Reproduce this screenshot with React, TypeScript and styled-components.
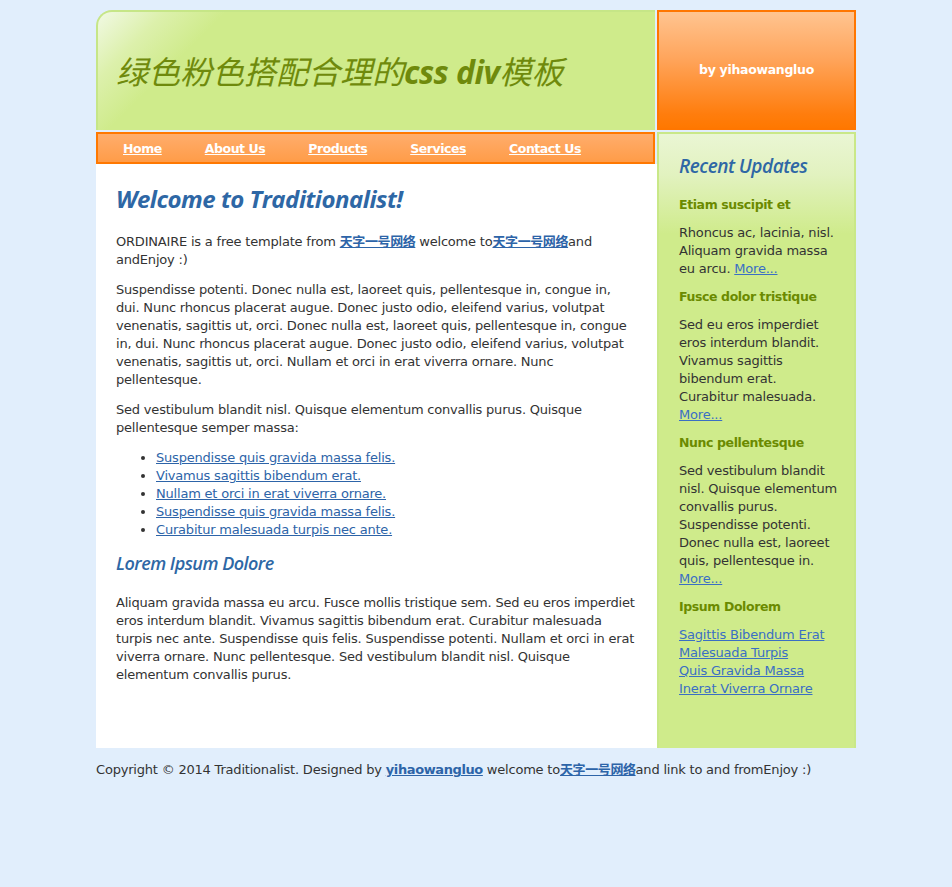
import React from "react";
import styled, { createGlobalStyle } from "styled-components";

const Global = createGlobalStyle`
  html, body { margin: 0; padding: 0; }
  body {
    background: #e1eefc;
    font-family: "DejaVu Sans", Verdana, "Noto Sans CJK SC", sans-serif;
    font-size: 13px;
    letter-spacing: -0.2px;
    line-height: 18px;
    color: #333333;
  }
`;

const Page = styled.div`
  width: 760px;
  margin: 10px auto 0;
`;

const Wrapper = styled.div`
  display: flex;
  align-items: stretch;
`;

const LeftCol = styled.div`
  width: 561px;
  display: flex;
  flex-direction: column;
`;

const RightCol = styled.div`
  width: 199px;
  display: flex;
  flex-direction: column;
`;

const Header = styled.div`
  width: 559px;
  height: 120px;
  box-sizing: border-box;
  margin-bottom: 2px;
  border-top: 2px solid #c6e687;
  border-left: 2px solid #c6e687;
  border-top-left-radius: 16px;
  background: linear-gradient(135deg, #f1f9e4 0%, #dcf0ab 10%, #cfeb8b 19%, #cfeb8b 100%);
  display: flex;
  align-items: center;
  padding-left: 18px;
`;

const Title = styled.h1`
  margin: 0;
  font-family: "Noto Sans CJK SC", "DejaVu Sans", sans-serif;
  font-weight: 400;
  font-style: italic;
  font-size: 32px;
  letter-spacing: 0;
  color: #6f8a0c;
  b {
    font-family: "Open Sans", "DejaVu Sans", sans-serif;
    font-weight: 700;
    letter-spacing: -0.5px;
  }
`;

const Brand = styled.div`
  height: 120px;
  box-sizing: border-box;
  margin-bottom: 2px;
  border: 2px solid #ff7600;
  background: linear-gradient(#ffc490 0%, #ffa55c 40%, #ff7d0d 88%, #ff7800 100%);
  display: flex;
  align-items: center;
  justify-content: center;
  color: #ffffff;
  font-weight: 700;
  font-size: 12.5px;
  letter-spacing: -0.3px;
`;

const Nav = styled.nav`
  width: 559px;
  height: 32px;
  box-sizing: border-box;
  border: 2px solid #ff7800;
  background: linear-gradient(#ffad6c, #ff9c48);
  display: flex;
  align-items: center;
  gap: 43px;
  padding: 2px 0 0 25px;
`;

const NavLink = styled.a`
  color: #ffffff;
  font-weight: 700;
  font-size: 12.5px;
  letter-spacing: -0.45px;
  text-decoration: underline;
  cursor: pointer;
`;

const Main = styled.main`
  flex: 1;
  background: #ffffff;
  padding: 20px 20px 52px 20px;
`;

const H1 = styled.h2`
  margin: 0 0 19px;
  font-family: "Open Sans", "DejaVu Sans", sans-serif;
  font-style: italic;
  font-weight: 700;
  font-size: 24px;
  line-height: 30px;
  letter-spacing: -0.5px;
  color: #2e67a5;
`;

const H2 = styled.h3`
  margin: 12px 0 19px;
  font-family: "Open Sans", "DejaVu Sans", sans-serif;
  font-style: italic;
  font-weight: 600;
  font-size: 18px;
  line-height: 24px;
  letter-spacing: -0.5px;
  color: #2e67a5;
`;

const P = styled.p`
  margin: 0 0 12px;
`;

const InlineLink = styled.a<{ $bold?: boolean }>`
  color: #2d64a8;
  text-decoration: underline;
  font-weight: ${(p) => (p.$bold ? 700 : 400)};
  letter-spacing: ${(p) => (p.$bold ? "-0.4px" : "inherit")};
  cursor: pointer;
`;

const List = styled.ul`
  margin: 0 0 12px;
  padding-left: 40px;
  li { margin: 0; }
`;

const Sidebar = styled.aside`
  flex: 1;
  box-sizing: border-box;
  border: 2px solid #c9e888;
  border-bottom: none;
  background: linear-gradient(#eaf6d4 0px, #e2f2c0 40px, #cfeb8b 100px, #cfeb8b 100%);
  padding: 19px 16px 30px 20px;
`;

const SideTitle = styled.h2`
  margin: 0 0 17px;
  font-family: "Open Sans", "DejaVu Sans", sans-serif;
  font-style: italic;
  font-weight: 600;
  font-size: 19px;
  line-height: 26px;
  letter-spacing: -0.5px;
  color: #2e67a5;
`;

const SideHead = styled.h4`
  margin: 0 0 10px;
  font-size: 12.5px;
  line-height: 18px;
  font-weight: 700;
  letter-spacing: -0.4px;
  color: #6b8a00;
`;

const SideP = styled.p`
  margin: 0 0 10px;
`;

const SideLink = styled.a`
  color: #3a6fc4;
  text-decoration: underline;
  cursor: pointer;
`;

const LinkStack = styled.div`
  display: flex;
  flex-direction: column;
  align-items: flex-start;
`;

const Footer = styled.footer`
  padding-top: 13px;
  line-height: 18px;
`;

const cn = "天字一号网络";

export default function App() {
  return (
    <>
      <Global />
      <Page>
        <Wrapper>
          <LeftCol>
            <Header>
              <Title>
                绿色粉色搭配合理的<b>css div</b>模板
              </Title>
            </Header>
            <Nav>
              <NavLink>Home</NavLink>
              <NavLink>About Us</NavLink>
              <NavLink>Products</NavLink>
              <NavLink>Services</NavLink>
              <NavLink>Contact Us</NavLink>
            </Nav>
            <Main>
              <H1>Welcome to Traditionalist!</H1>
              <P>
                ORDINAIRE is a free template from <InlineLink $bold>{cn}</InlineLink> welcome to
                <InlineLink $bold>{cn}</InlineLink>and andEnjoy :)
              </P>
              <P>
                Suspendisse potenti. Donec nulla est, laoreet quis, pellentesque in, congue in,
                dui. Nunc rhoncus placerat augue. Donec justo odio, eleifend varius, volutpat
                venenatis, sagittis ut, orci. Donec nulla est, laoreet quis, pellentesque in, congue
                in, dui. Nunc rhoncus placerat augue. Donec justo odio, eleifend varius, volutpat
                venenatis, sagittis ut, orci. Nullam et orci in erat viverra ornare. Nunc
                pellentesque.
              </P>
              <P>
                Sed vestibulum blandit nisl. Quisque elementum convallis purus. Quisque
                pellentesque semper massa:
              </P>
              <List>
                <li><InlineLink>Suspendisse quis gravida massa felis.</InlineLink></li>
                <li><InlineLink>Vivamus sagittis bibendum erat.</InlineLink></li>
                <li><InlineLink>Nullam et orci in erat viverra ornare.</InlineLink></li>
                <li><InlineLink>Suspendisse quis gravida massa felis.</InlineLink></li>
                <li><InlineLink>Curabitur malesuada turpis nec ante.</InlineLink></li>
              </List>
              <H2>Lorem Ipsum Dolore</H2>
              <P>
                Aliquam gravida massa eu arcu. Fusce mollis tristique sem. Sed eu eros imperdiet
                eros interdum blandit. Vivamus sagittis bibendum erat. Curabitur malesuada
                turpis nec ante. Suspendisse quis felis. Suspendisse potenti. Nullam et orci in erat
                viverra ornare. Nunc pellentesque. Sed vestibulum blandit nisl. Quisque
                elementum convallis purus.
              </P>
            </Main>
          </LeftCol>
          <RightCol>
            <Brand>by yihaowangluo</Brand>
            <Sidebar>
              <SideTitle>Recent Updates</SideTitle>
              <SideHead>Etiam suscipit et</SideHead>
              <SideP>
                Rhoncus ac, lacinia, nisl. Aliquam gravida massa eu arcu. <SideLink>More...</SideLink>
              </SideP>
              <SideHead>Fusce dolor tristique</SideHead>
              <SideP>
                Sed eu eros imperdiet eros interdum blandit. Vivamus sagittis bibendum erat.
                Curabitur malesuada. <SideLink>More...</SideLink>
              </SideP>
              <SideHead>Nunc pellentesque</SideHead>
              <SideP>
                Sed vestibulum blandit nisl. Quisque elementum convallis purus. Suspendisse
                potenti. Donec nulla est, laoreet quis, pellentesque in. <SideLink>More...</SideLink>
              </SideP>
              <SideHead>Ipsum Dolorem</SideHead>
              <LinkStack>
                <SideLink>Sagittis Bibendum Erat</SideLink>
                <SideLink>Malesuada Turpis</SideLink>
                <SideLink>Quis Gravida Massa</SideLink>
                <SideLink>Inerat Viverra Ornare</SideLink>
              </LinkStack>
            </Sidebar>
          </RightCol>
        </Wrapper>
        <Footer>
          Copyright © 2014 Traditionalist. Designed by <InlineLink $bold>yihaowangluo</InlineLink> welcome to
          <InlineLink $bold>{cn}</InlineLink>and link to and fromEnjoy :)
        </Footer>
      </Page>
    </>
  );
}
